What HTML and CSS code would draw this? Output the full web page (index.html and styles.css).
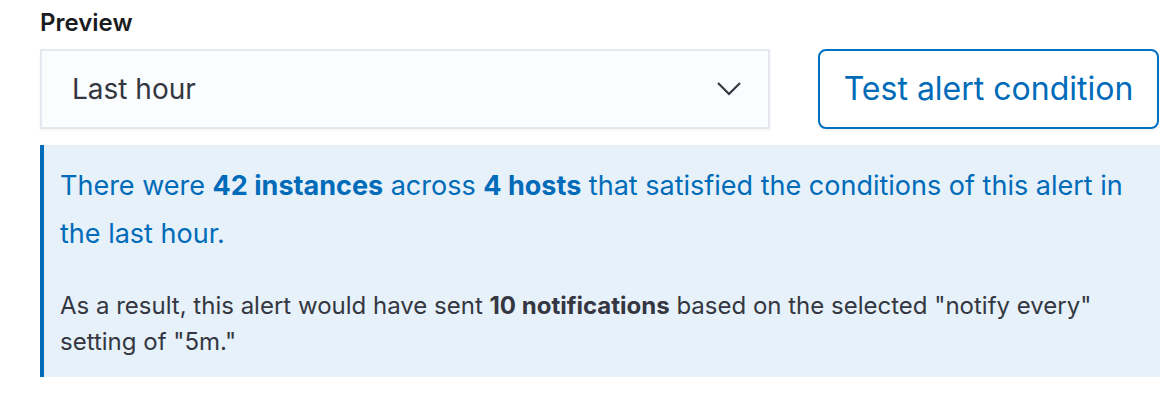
FILE: index.html
```html
<!DOCTYPE html>
<html>
<head>
<meta charset="utf-8">
<link rel="stylesheet" href="styles.css">
</head>
<body>
<div class="page">
  <div class="label">Preview</div>
  <div class="row">
    <div class="select">
      <span class="select-value">Last hour</span>
      <svg class="chevron" width="26" height="16" viewBox="0 0 26 16"><path d="M2 2 L13 13 L24 2" fill="none" stroke="#343741" stroke-width="2.2"/></svg>
    </div>
    <button class="btn">Test alert condition</button>
  </div>
  <div class="callout">
    <p class="title">There were <b>42 instances</b> across <b>4 hosts</b> that satisfied the conditions of this alert in the last hour.</p>
    <p class="body">As a result, this alert would have sent <b>10 notifications</b> based on the selected "notify every" setting of "5m."</p>
  </div>
</div>
</body>
</html>
```
FILE: styles.css
```css
html, body {
  margin: 0;
  padding: 0;
  background: #ffffff;
}
.page {
  font-family: Inter, "Noto Sans", sans-serif;
  padding: 0 16px 0 40px;
  width: 1120px;
}
.label {
  font-size: 24px;
  font-weight: 600;
  color: #1a1c21;
  height: 49px;
  line-height: 46px;
}
.row {
  display: flex;
  align-items: stretch;
  gap: 48px;
}
.select {
  box-sizing: border-box;
  width: 730px;
  height: 80px;
  background: #fbfcfd;
  border: 2px solid #e6e8f0;
  box-shadow: 0 2px 3px rgba(0,0,0,0.04);
  display: flex;
  align-items: center;
  justify-content: space-between;
  padding: 0 26px 0 30px;
}
.select-value {
  font-size: 28px;
  color: #343741;
}
.chevron {
  display: block;
}
.btn {
  box-sizing: border-box;
  width: 341px;
  height: 80px;
  background: #ffffff;
  border: 2px solid #0071c2;
  border-radius: 8px;
  color: #006bb8;
  font-family: Inter, "Noto Sans", sans-serif;
  font-size: 32px;
  font-weight: 400;
  padding: 0 0 2px 0;
  box-shadow: 0 2px 3px rgba(0,0,0,0.05);
}
.callout {
  margin-top: 16px;
  background: #e6f1fa;
  border-left: 4px solid #006bb8;
  padding: 17px 20px 17px 16px;
}
.title {
  margin: 0;
  font-size: 27px;
  line-height: 48px;
  color: #006bb8;
}
.title b {
  font-weight: 700;
}
.body {
  margin: 30px 0 0 0;
  font-size: 24px;
  line-height: 36px;
  color: #343741;
}
.body b {
  font-weight: 700;
  color: #343741;
}
```
